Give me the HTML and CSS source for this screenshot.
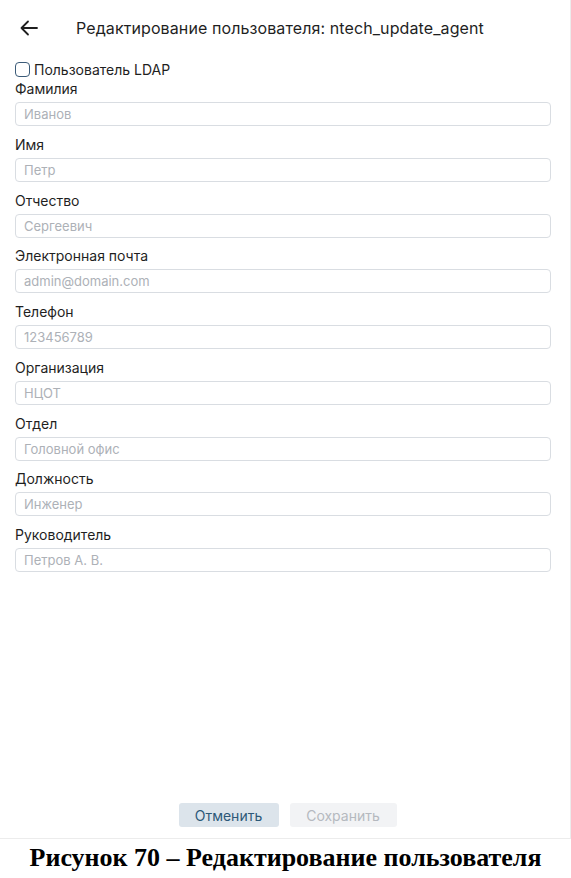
FILE: index.html
```html
<!DOCTYPE html>
<html lang="ru">
<head>
<meta charset="utf-8">
<title>Редактирование пользователя</title>
<link rel="stylesheet" href="styles.css">
</head>
<body>
<div class="app">
  <header class="header">
    <button class="back" aria-label="Назад">
      <svg width="20" height="20" viewBox="0 0 20 20" fill="none" stroke="#1f1f1f" stroke-width="1.8" stroke-linecap="round" stroke-linejoin="round"><path d="M18 10H2.5M9 3.5L2.5 10L9 16.5"/></svg>
    </button>
    <h1 class="title">Редактирование пользователя: ntech_update_agent</h1>
  </header>
  <main class="form">
    <label class="check"><span class="box"></span>Пользователь LDAP</label>
    <div class="field"><div class="label">Фамилия</div><div class="input">Иванов</div></div>
    <div class="field"><div class="label">Имя</div><div class="input">Петр</div></div>
    <div class="field"><div class="label">Отчество</div><div class="input">Сергеевич</div></div>
    <div class="field"><div class="label">Электронная почта</div><div class="input">admin@domain.com</div></div>
    <div class="field"><div class="label">Телефон</div><div class="input">123456789</div></div>
    <div class="field"><div class="label">Организация</div><div class="input">НЦОТ</div></div>
    <div class="field"><div class="label">Отдел</div><div class="input">Головной офис</div></div>
    <div class="field"><div class="label">Должность</div><div class="input">Инженер</div></div>
    <div class="field"><div class="label">Руководитель</div><div class="input">Петров А. В.</div></div>
  </main>
  <footer class="actions">
    <button class="btn btn-cancel">Отменить</button>
    <button class="btn btn-save">Сохранить</button>
  </footer>
</div>
<p class="caption">Рисунок 70 – Редактирование пользователя</p>
</body>
</html>
```
FILE: styles.css
```css
* { box-sizing: border-box; }
html, body { margin: 0; padding: 0; background: #fff; }
body { width: 571px; font-family: Inter, "Noto Sans", sans-serif; color: #1f1f1f; }

.app {
  width: 571px;
  height: 839px;
  border-right: 1px solid #ececec;
  border-bottom: 1px solid #ececec;
  display: flex;
  flex-direction: column;
}

.header {
  height: 56px;
  display: flex;
  align-items: center;
  padding-left: 19px;
  flex: none;
}
.back {
  border: 0;
  background: none;
  padding: 0;
  width: 20px;
  height: 20px;
  display: flex;
  cursor: pointer;
}
.title {
  margin: 0 0 0 37px;
  font-size: 16px;
  font-weight: 400;
  color: #1f1f1f;
  letter-spacing: 0.1px;
}

.form {
  flex: 1;
  padding: 3px 19px 0 15px;
  display: flex;
  flex-direction: column;
}
.check {
  display: flex;
  align-items: center;
  height: 20px;
  font-size: 14px;
  gap: 4px;
}
.box {
  width: 15px;
  height: 15px;
  border: 1.5px solid #3b5b78;
  border-radius: 4px;
  background: #fff;
}
.field {
  display: flex;
  flex-direction: column;
  margin-bottom: 8.75px;
}
.label {
  height: 20px;
  line-height: 20px;
  font-size: 14px;
  color: #1f1f1f;
  margin-bottom: 3px;
}
.input {
  height: 24px;
  border: 1px solid #d9dde2;
  border-radius: 4px;
  padding: 0 8px;
  font-size: 13px;
  line-height: 22px;
  color: #adb1b7;
}

.actions {
  flex: none;
  display: flex;
  justify-content: center;
  gap: 11px;
  padding-bottom: 11px;
  padding-left: 5px;
}
.btn {
  height: 24px;
  border: 0;
  border-radius: 3px;
  font-family: Inter, "Noto Sans", sans-serif;
  font-size: 14px;
  padding: 0;
}
.btn-cancel { width: 100px; background: #dce4eb; color: #2c5878; }
.btn-save { width: 107px; background: #f2f3f5; color: #b5b9bf; }

.caption {
  margin: 0;
  height: 39px;
  line-height: 38px;
  text-align: center;
  font-family: "Liberation Serif", "Times New Roman", serif;
  font-weight: 700;
  font-size: 26px;
  color: #000;
}
```
